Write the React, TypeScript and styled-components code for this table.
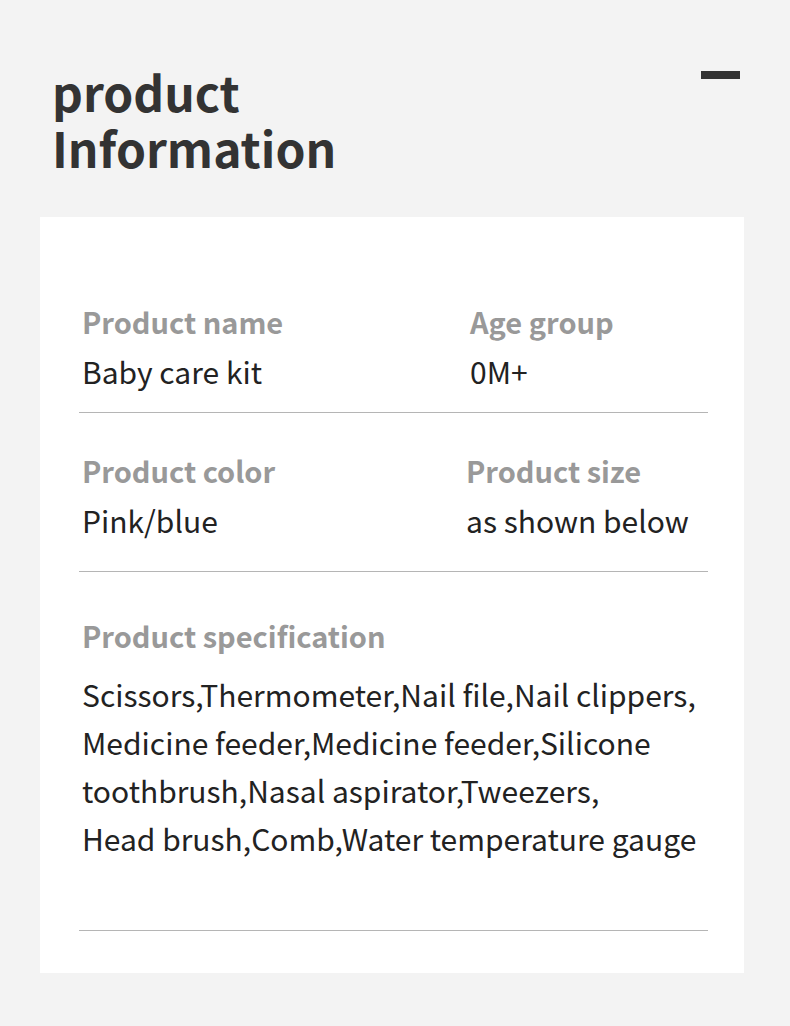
import React from "react";
import styled, { createGlobalStyle } from "styled-components";

const Global = createGlobalStyle`
  html, body { margin: 0; padding: 0; background: #f3f3f3; }
  body { font-family: "Noto Sans CJK SC", "Noto Sans", sans-serif; }
`;

const Page = styled.div`
  width: 790px;
  height: 1026px;
  background: #f3f3f3;
  padding: 63px 50px 0 40px;
  box-sizing: border-box;
`;

const Header = styled.div`
  display: flex;
  justify-content: space-between;
  align-items: flex-start;
  padding-left: 12px;
  height: 154px;
`;

const Title = styled.h1`
  margin: 0;
  font-size: 48px;
  line-height: 56px;
  font-weight: 700;
  color: #333333;
`;

const Dash = styled.div`
  width: 39px;
  height: 8px;
  background: #333333;
  margin-top: 8px;
`;

const Card = styled.div`
  background: #ffffff;
  width: 704px;
  height: 756px;
  box-sizing: border-box;
  padding: 83px 36px 0 39px;
`;

const Row = styled.div<{ $pad?: number }>`
  display: grid;
  grid-template-columns: 388px 1fr;
  border-bottom: 1px solid #b5b5b5;
  padding: 0 0 ${(p) => p.$pad ?? 20}px 3px;
  margin-bottom: 36px;
`;

const Cell = styled.div<{ $shift?: number }>`
  display: flex;
  flex-direction: column;
  gap: 8px;
  margin-left: ${(p) => p.$shift ?? 0}px;
`;

const Label = styled.div`
  font-size: 29px;
  line-height: 42px;
  font-weight: 700;
  color: #999999;
  white-space: nowrap;
`;

const Value = styled.div`
  font-size: 30px;
  line-height: 42px;
  font-weight: 400;
  color: #222222;
  white-space: nowrap;
`;

const SpecBlock = styled.div`
  border-bottom: 1px solid #b5b5b5;
  padding: 6px 0 68px 3px;
  display: flex;
  flex-direction: column;
  gap: 14px;
`;

const SpecText = styled.div`
  font-size: 30px;
  line-height: 48px;
  color: #222222;
  white-space: nowrap;
`;

export default function App() {
  return (
    <>
      <Global />
      <Page>
        <Header>
          <Title>
            product
            <br />
            Information
          </Title>
          <Dash />
        </Header>
        <Card>
          <Row>
            <Cell>
              <Label>Product name</Label>
              <Value>Baby care kit</Value>
            </Cell>
            <Cell>
              <Label>Age group</Label>
              <Value>0M+</Value>
            </Cell>
          </Row>
          <Row $pad={30}>
            <Cell>
              <Label>Product color</Label>
              <Value>Pink/blue</Value>
            </Cell>
            <Cell $shift={-4}>
              <Label>Product size</Label>
              <Value>as shown below</Value>
            </Cell>
          </Row>
          <SpecBlock>
            <Label>Product specification</Label>
            <SpecText>
              Scissors,Thermometer,Nail file,Nail clippers,
              <br />
              Medicine feeder,Medicine feeder,Silicone
              <br />
              toothbrush,Nasal aspirator,Tweezers,
              <br />
              Head brush,Comb,Water temperature gauge
            </SpecText>
          </SpecBlock>
        </Card>
      </Page>
    </>
  );
}
